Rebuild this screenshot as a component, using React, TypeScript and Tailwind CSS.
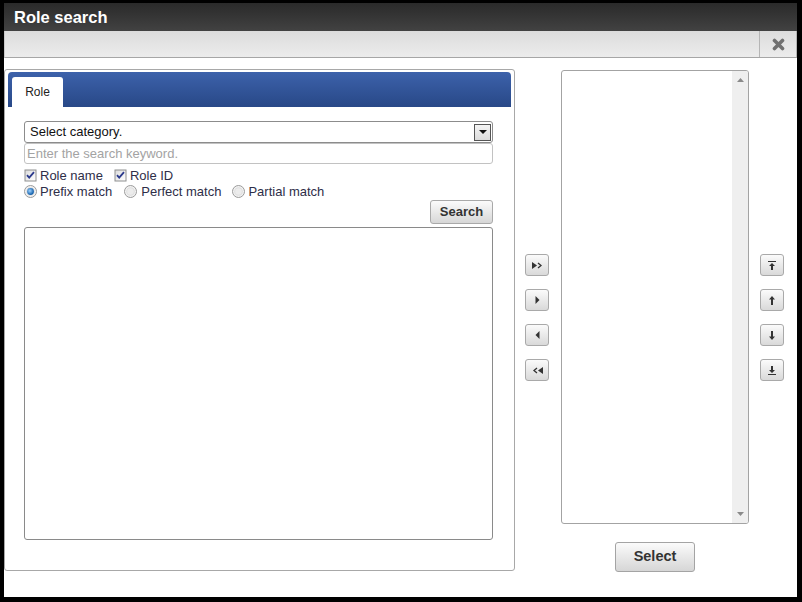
import React from "react";

const font = { fontFamily: "'Liberation Sans', Arial, sans-serif" };

function SmallBtn({ children }: { children: React.ReactNode }) {
  return (
    <div className="w-[24px] h-[22px] rounded-[3px] border border-[#a9a9a9] bg-linear-to-b from-[#fbfbfb] to-[#d9d9d9] flex items-center justify-center">
      {children}
    </div>
  );
}

function CheckBox() {
  return (
    <svg width="13" height="13" viewBox="0 0 13 13" className="shrink-0">
      <defs>
        <linearGradient id="cbg" x1="0" y1="0" x2="1" y2="1">
          <stop offset="0" stopColor="#dcdcdc" />
          <stop offset="1" stopColor="#ffffff" />
        </linearGradient>
      </defs>
      <rect x="0.5" y="0.5" width="12" height="12" fill="#8e8f8f" />
      <rect x="1.5" y="1.5" width="10" height="10" fill="url(#cbg)" />
      <path d="M3 6.2 L5.2 8.6 L10 3.2" fill="none" stroke="#2b3a8c" strokeWidth="1.8" />
    </svg>
  );
}

function Radio({ checked }: { checked?: boolean }) {
  return (
    <svg width="13" height="13" viewBox="0 0 13 13" className="shrink-0">
      <defs>
        <radialGradient id="rg" cx="0.4" cy="0.4" r="0.6">
          <stop offset="0" stopColor="#9fd3ff" />
          <stop offset="1" stopColor="#0d5ba8" />
        </radialGradient>
      </defs>
      <circle cx="6.5" cy="6.5" r="6" fill="#f2f2f2" stroke="#9a9a9a" strokeWidth="1" />
      <circle cx="6.5" cy="6.5" r="4.3" fill="#dedede" />
      <circle cx="6.5" cy="6.5" r="3.3" fill="#ececec" />
      {checked && <circle cx="6.5" cy="6.5" r="3.4" fill="url(#rg)" />}
    </svg>
  );
}

export default function App() {
  return (
    <div
      className="w-[802px] h-[602px] bg-black border-black pl-[4px] pt-[3px] pr-[5px] pb-[5px]"
      style={font}
    >
      <div className="w-full h-full flex flex-col bg-white">
        {/* Title bar */}
        <div className="h-[28px] bg-linear-to-b from-[#2a2a2a] to-[#424242] flex items-center pl-[10px]">
          <span className="text-white font-bold text-[16.5px] leading-none">Role search</span>
        </div>
        {/* Toolbar */}
        <div className="h-[27px] bg-linear-to-b from-[#dcdcdc] to-[#ececec] border-b border-[#a6a6a6] border-l border-l-[#c8c8c8] flex justify-end">
          <div className="w-[38px] h-full border-l border-r border-[#b5b5b5] flex items-center justify-center">
            <svg width="13" height="13" viewBox="0 0 13 13">
              <path d="M2.5 2.5 L10.5 10.5 M10.5 2.5 L2.5 10.5" stroke="#707070" strokeWidth="3.6" strokeLinecap="round" />
            </svg>
          </div>
        </div>
        {/* Content */}
        <div className="flex items-start">
          {/* Left panel */}
          <div className="mt-[11px] w-[511px] h-[502px] border border-[#a8a8a8] rounded-[3px] px-[3px] pt-[2px]">
            <div className="h-[35px] rounded-t-[4px] bg-linear-to-b from-[#3d62ab] to-[#284887] pl-[4px] pt-[5px] flex">
              <div className="w-[51px] h-[30px] bg-white rounded-t-[3px] flex items-center justify-center text-[12px] text-[#222]">
                Role
              </div>
            </div>
            <div className="pl-[16px] pr-[18px] pt-[14px] text-[13px] text-[#2e2e48]">
              {/* Select */}
              <div className="h-[22px] border border-[#8c8c8c] rounded-[3px] flex items-center justify-between pl-[5px] pr-[1px] text-[#111]">
                <span>Select category.</span>
                <div className="w-[17px] h-[17px] border border-[#555] bg-linear-to-b from-[#f4f4f4] to-[#dcdcdc] flex items-center justify-center">
                  <svg width="8" height="4" viewBox="0 0 8 4">
                    <path d="M0 0 L8 0 L4 4 Z" fill="#111" />
                  </svg>
                </div>
              </div>
              {/* Input */}
              <div className="h-[21px] border border-[#c2c2c2] rounded-[3px] flex items-center pl-[2px] text-[#a3a3a3]">
                Enter the search keyword.
              </div>
              {/* Checkboxes */}
              <div className="h-[16px] mt-[3px] flex items-center leading-none">
                <CheckBox />
                <span className="ml-[3px]">Role name</span>
                <span className="ml-[11px]"><CheckBox /></span>
                <span className="ml-[3px]">Role ID</span>
              </div>
              {/* Radios */}
              <div className="h-[16px] flex items-center leading-none">
                <Radio checked />
                <span className="ml-[3px]">Prefix match</span>
                <span className="ml-[12px] flex"><Radio /></span>
                <span className="ml-[4px]">Perfect match</span>
                <span className="ml-[11px] flex"><Radio /></span>
                <span className="ml-[3px]">Partial match</span>
              </div>
              <div className="flex justify-end mt-[1px]">
                <div className="w-[63px] h-[24px] rounded-[3px] border border-[#a9a9a9] bg-linear-to-b from-[#fbfbfb] to-[#d7d7d7] flex items-center justify-center font-bold text-[13px] text-[#333]">
                  Search
                </div>
              </div>
              <div className="mt-[3px] h-[313px] border border-[#8a8a8a] rounded-[3px]" />
            </div>
          </div>
          {/* Middle buttons */}
          <div className="ml-[10px] mt-[196px] flex flex-col gap-[13px]">
            <SmallBtn>
              <svg width="11" height="7" viewBox="0 0 11 7">
                <path d="M0 0 L5 3.5 L0 7 Z" fill="#333" />
                <path d="M6 1 L9 3.5 L6 6" fill="none" stroke="#333" strokeWidth="1.3" />
              </svg>
            </SmallBtn>
            <SmallBtn>
              <svg width="5" height="8" viewBox="0 0 5 8">
                <path d="M0.5 0 L4.5 4 L0.5 8 Z" fill="#333" />
              </svg>
            </SmallBtn>
            <SmallBtn>
              <svg width="5" height="8" viewBox="0 0 5 8">
                <path d="M4.5 0 L0.5 4 L4.5 8 Z" fill="#333" />
              </svg>
            </SmallBtn>
            <SmallBtn>
              <svg width="11" height="7" viewBox="0 0 11 7">
                <path d="M5 1 L2 3.5 L5 6" fill="none" stroke="#333" strokeWidth="1.3" />
                <path d="M11 0 L6 3.5 L11 7 Z" fill="#333" />
              </svg>
            </SmallBtn>
          </div>
          {/* Right list */}
          <div className="ml-[12px] mt-[12px] flex flex-col items-center">
            <div className="w-[188px] h-[454px] border border-[#a3a3a3] rounded-[3px] flex justify-end overflow-hidden">
              <div className="w-[16px] h-full bg-[#efefef] flex flex-col justify-between items-center py-[7px]">
                <svg width="7" height="4" viewBox="0 0 7 4">
                  <path d="M0 4 L3.5 0 L7 4 Z" fill="#8a8a8a" />
                </svg>
                <svg width="7" height="4" viewBox="0 0 7 4">
                  <path d="M0 0 L3.5 4 L7 0 Z" fill="#8a8a8a" />
                </svg>
              </div>
            </div>
            <div className="mt-[18px] w-[80px] h-[30px] rounded-[3px] border border-[#a4a4a4] bg-linear-to-b from-[#fbfbfb] to-[#d6d6d6] flex items-center justify-center font-bold text-[14.5px] text-[#333]">
              Select
            </div>
          </div>
          {/* Right buttons */}
          <div className="ml-[11px] mt-[196px] flex flex-col gap-[13px]">
            <SmallBtn>
              <svg width="8" height="9" viewBox="0 0 8 9">
                <path d="M0 0.5 H8" stroke="#333" strokeWidth="1" />
                <path d="M4 2 L7 5 H5 V9 H3 V5 H1 Z" fill="#333" />
              </svg>
            </SmallBtn>
            <SmallBtn>
              <svg width="8" height="9" viewBox="0 0 8 9">
                <path d="M4 0 L7 3.5 H5 V9 H3 V3.5 H1 Z" fill="#333" />
              </svg>
            </SmallBtn>
            <SmallBtn>
              <svg width="8" height="9" viewBox="0 0 8 9">
                <path d="M4 9 L7 5.5 H5 V0 H3 V5.5 H1 Z" fill="#333" />
              </svg>
            </SmallBtn>
            <SmallBtn>
              <svg width="8" height="9" viewBox="0 0 8 9">
                <path d="M4 7 L7 4 H5 V0 H3 V4 H1 Z" fill="#333" />
                <path d="M0 8.5 H8" stroke="#333" strokeWidth="1" />
              </svg>
            </SmallBtn>
          </div>
        </div>
      </div>
    </div>
  );
}
